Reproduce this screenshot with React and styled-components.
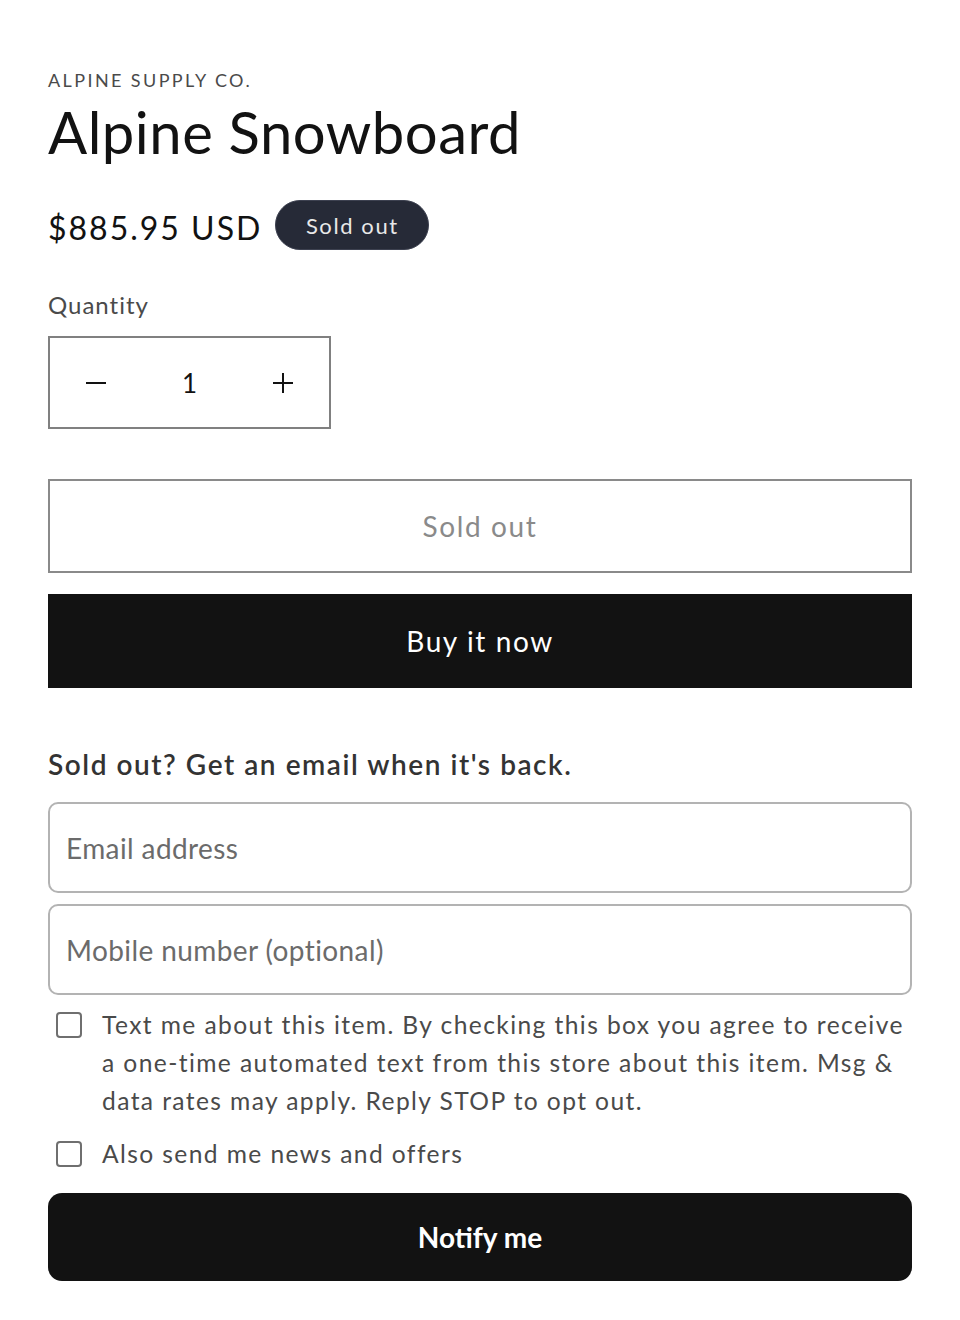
import * as React from "react";
import styled, { createGlobalStyle } from "styled-components";

const GlobalStyle = createGlobalStyle`
  html, body {
    margin: 0;
    padding: 0;
    background: #fff;
  }
  body {
    font-family: "Lato", "Liberation Sans", sans-serif;
    color: #121212;
  }
  * {
    box-sizing: border-box;
  }
`;

const Page = styled.div`
  width: 960px;
  padding: 68px 48px 40px;
  display: flex;
  flex-direction: column;
`;

// Header
const Vendor = styled.div`
  font-size: 18px;
  letter-spacing: 2.4px;
  color: #4a4a4a;
  line-height: 24px;
`;

const Title = styled.h1`
  margin: 8px 0 0;
  font-size: 58px;
  font-weight: 400;
  letter-spacing: 0.5px;
  line-height: 64px;
`;

const PriceRow = styled.div`
  display: flex;
  align-items: center;
  gap: 13px;
  margin-top: 36px;
`;

const Price = styled.span`
  font-size: 32px;
  letter-spacing: 2px;
  line-height: 40px;
  margin-top: 6px;
`;

const Badge = styled.span`
  display: inline-flex;
  align-items: center;
  justify-content: center;
  width: 154px;
  height: 50px;
  border-radius: 25px;
  background: #262a37;
  border: 1px solid #3d4150;
  color: #e8e8e8;
  font-size: 22px;
  letter-spacing: 1.6px;
`;

// Quantity
const Label = styled.div`
  margin-top: 40px;
  font-size: 24px;
  letter-spacing: 1px;
  color: #4a4a4a;
  line-height: 30px;
`;

const Quantity = styled.div`
  margin-top: 16px;
  width: 283px;
  height: 93px;
  border: 2px solid #808080;
  display: flex;
  align-items: center;
`;

const QtyButton = styled.button`
  width: 92px;
  height: 100%;
  border: 0;
  background: transparent;
  display: flex;
  align-items: center;
  justify-content: center;
  padding: 0;
  color: #121212;
`;

const QtyValue = styled.span`
  flex: 1;
  text-align: center;
  font-size: 26px;
  color: #121212;
`;

// Buttons
const Actions = styled.div`
  margin-top: 50px;
  display: flex;
  flex-direction: column;
  gap: 21px;
`;

const Button = styled.button`
  width: 100%;
  height: ${(p) => (p.$round ? "88px" : "94px")};
  border-radius: ${(p) => (p.$round ? "14px" : "0")};
  border: ${(p) => (p.$outline ? "2px solid #8a8a8a" : "0")};
  background: ${(p) => (p.$outline ? "#fff" : "#121212")};
  color: ${(p) => (p.$outline ? "#8a8a8a" : "#fff")};
  font-family: inherit;
  font-size: 28px;
  font-weight: ${(p) => (p.$bold ? 700 : 400)};
  letter-spacing: ${(p) => (p.$bold ? "0" : "1.6px")};
  margin-top: ${(p) => p.$mt || "0"};
  display: flex;
  align-items: center;
  justify-content: center;
  padding: 0;
`;

// Back in stock form
const Form = styled.form`
  margin-top: 58px;
  display: flex;
  flex-direction: column;
`;

const FormTitle = styled.h3`
  margin: 0 0 20px;
  font-size: 28px;
  font-weight: 600;
  letter-spacing: 1.55px;
  color: #333;
  line-height: 36px;
`;

const Input = styled.input`
  width: 100%;
  height: 91px;
  border: 2px solid #b3b3b3;
  border-radius: 10px;
  padding: 0 16px;
  font-family: inherit;
  font-size: 28px;
  letter-spacing: 0.4px;
  color: #121212;
  margin-bottom: 11px;
  outline: none;

  &::placeholder {
    color: #6b6b6b;
  }
`;

const CheckRow = styled.label`
  display: flex;
  align-items: flex-start;
  gap: 20px;
  padding-left: 8px;
  margin-top: ${(p) => p.$mt || "0"};
`;

const Box = styled.span`
  flex: none;
  width: 26px;
  height: 26px;
  border: 2px solid #6f6f6f;
  border-radius: 4px;
  margin-top: 6px;
`;

const CheckText = styled.span`
  font-size: 24.6px;
  line-height: 38px;
  letter-spacing: 1.4px;
  color: #4a4a4a;
`;

const Minus = () => (
  <svg width="22" height="22" viewBox="0 0 22 22" fill="none" stroke="#121212" strokeWidth="2">
    <path d="M1 11h20" />
  </svg>
);

const Plus = () => (
  <svg width="22" height="22" viewBox="0 0 22 22" fill="none" stroke="#121212" strokeWidth="2">
    <path d="M1 11h20M11 1v20" />
  </svg>
);

const App = () => (
  <>
    <GlobalStyle />
    <Page>
      <Vendor>ALPINE SUPPLY CO.</Vendor>
      <Title>Alpine Snowboard</Title>
      <PriceRow>
        <Price>$885.95 USD</Price>
        <Badge>Sold out</Badge>
      </PriceRow>

      <Label>Quantity</Label>
      <Quantity>
        <QtyButton type="button" aria-label="Decrease quantity">
          <Minus />
        </QtyButton>
        <QtyValue>1</QtyValue>
        <QtyButton type="button" aria-label="Increase quantity">
          <Plus />
        </QtyButton>
      </Quantity>

      <Actions>
        <Button $outline type="button">Sold out</Button>
        <Button type="button">Buy it now</Button>
      </Actions>

      <Form onSubmit={(e) => e.preventDefault()}>
        <FormTitle>Sold out? Get an email when it's back.</FormTitle>
        <Input type="email" placeholder="Email address" />
        <Input type="tel" placeholder="Mobile number (optional)" />
        <CheckRow>
          <Box />
          <CheckText>
            Text me about this item. By checking this box you agree to receive a
            one-time automated text from this store about this item. Msg &amp;
            data rates may apply. Reply STOP to opt out.
          </CheckText>
        </CheckRow>
        <CheckRow $mt="15px">
          <Box />
          <CheckText>Also send me news and offers</CheckText>
        </CheckRow>
        <Button $round $bold $mt="20px" type="submit">
          Notify me
        </Button>
      </Form>
    </Page>
  </>
);

export default App;
